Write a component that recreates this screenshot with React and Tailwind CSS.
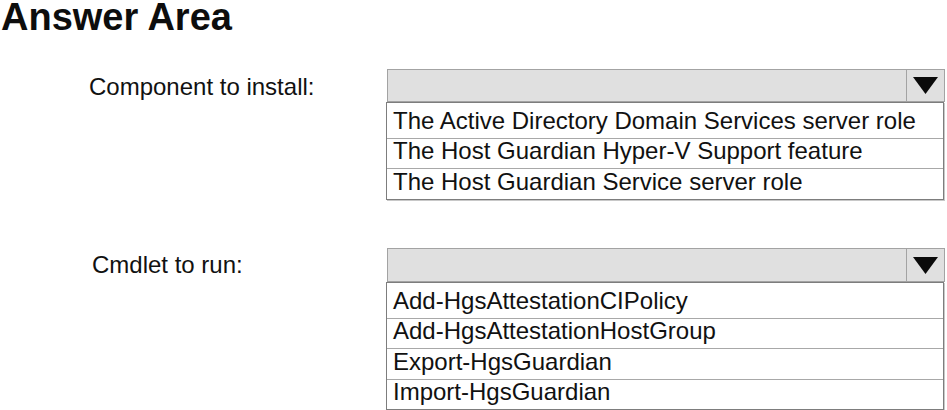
import React from 'react';

const components = [
  'The Active Directory Domain Services server role',
  'The Host Guardian Hyper-V Support feature',
  'The Host Guardian Service server role',
];

const cmdlets = [
  'Add-HgsAttestationCIPolicy',
  'Add-HgsAttestationHostGroup',
  'Export-HgsGuardian',
  'Import-HgsGuardian',
];

const Arrow = () => (
  <svg width="25" height="17" viewBox="0 0 25 17">
    <polygon points="0,0 25,0 12.5,17" fill="#0a0a0a" />
  </svg>
);

const DropDown = ({ items, heights, headerH }) => {
  return (
    <div className="w-[559px] shrink-0">
      <div
        className={`ml-[1px] flex border border-[#a3a3a3] bg-[#e0e0e0] ${headerH}`}
      >
        <div className="flex-1" />
        <div className="w-[38px] flex items-center justify-center border-l border-[#a3a3a3]">
          <Arrow />
        </div>
      </div>
      <div className="w-[558px] border border-[#7d7d7d] bg-white shadow-[1px_1px_0_#c8c8c8]">
        {items.map((item, i) => (
          <div
            key={item}
            className={`${heights[i]} pl-[6px] leading-[24px] text-[24px] text-[#111] flex items-end pb-[5px] whitespace-nowrap ${
              i > 0 ? 'border-t border-[#a8a8a8]' : ''
            }`}
          >
            {item}
          </div>
        ))}
      </div>
    </div>
  );
};

const App = () => {
  return (
    <div
      className="w-[947px] h-[410px] bg-white overflow-hidden text-[#111]"
      style={{ fontFamily: '"Liberation Sans", Arial, sans-serif' }}
    >
      <h1 className="pl-[1px] text-[38px] font-bold leading-[34px] text-[#0d0d0d]">
        Answer Area
      </h1>

      <div className="mt-[35px] flex">
        <p className="w-[386px] shrink-0 pl-[89px] pt-[1px] text-[24px] leading-[33px] whitespace-nowrap">
          Component to install:
        </p>
        <DropDown
          items={components}
          headerH="h-[33px]"
          heights={['h-[35px]', 'h-[30px]', 'h-[31px]']}
        />
      </div>

      <div className="mt-[48px] flex">
        <p className="w-[386px] shrink-0 pl-[92px] text-[24px] leading-[33px] whitespace-nowrap">
          Cmdlet to run:
        </p>
        <DropDown
          items={cmdlets}
          headerH="h-[34px]"
          heights={['h-[35px]', 'h-[30px]', 'h-[31px]', 'h-[30px]']}
        />
      </div>
    </div>
  );
};

export default App;
